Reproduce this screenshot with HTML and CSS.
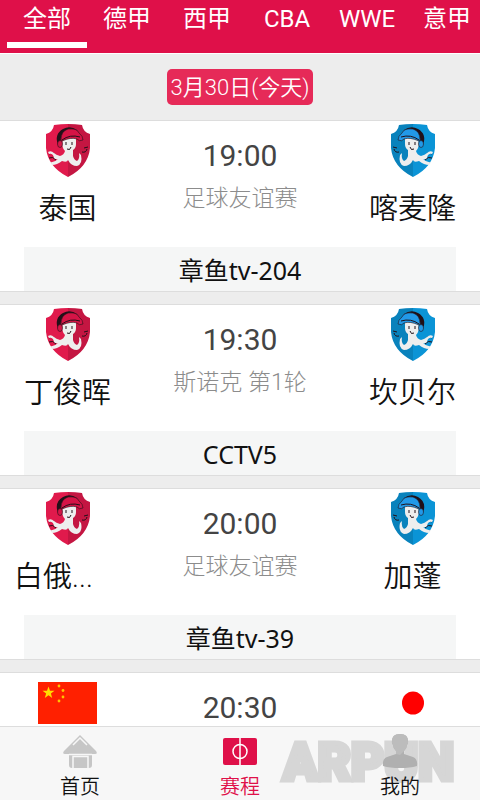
FILE: index.html
```
<!DOCTYPE html>
<html lang="zh-CN">

<head>
  <meta charset="UTF-8">
  <meta name="viewport" content="width=device-width, initial-scale=1.0">
  <title>赛程</title>
  <link rel="stylesheet" href="styles.css">
</head>

<body>
  <!-- shapes shared by the match cards -->
  <svg class="defs" aria-hidden="true">
    <symbol id="shield" viewBox="0 0 44 53">
      <path fill="currentColor" d="M8 1Q22-1 36 1Q37 8 44 10V24Q42 43 22 53Q2 43 0 24V10Q7 8 8 1Z" />
      <path class="shade" d="M22 0Q29 0 36 1Q37 8 44 10V24Q42 43 22 53Z" />
      <path class="curl" d="M3 30q4-3 6 1M3 34q4-2 7 2M36 28q4 1 5-3M38 24l4-1" />
      <path class="squid" d="M17 14L16 21Q17 25 19 27Q18 31 14 32Q10 31 8 29Q5 26 2 28L3 30Q7 29 8 34Q10 36 12 35Q8 39 4 38L6 41Q11 41 16 37Q21 39 22 36Q25 42 31 42Q37 40 35 31L33 29Q34 35 31 37Q28 36 27 32L27 26Q30 24 30 20V14Z" />
      <path class="ink" d="M12 21Q8 10 17 5Q24 1 31 6L32 8Q23 4 17 9Q14 12 15 21Z" />
      <path class="cap" d="M15 16Q15 7 22 5Q31 4 33 9Q37 12 37 16Q33 18 31 15Q25 13 16 17Z" />
      <path class="brim" d="M16 16Q24 10 34 13" />
      <ellipse class="cap" cx="14" cy="20" rx="2.500" ry="3.500" />
      <path class="eyes" d="M20 18v3M26 18v3M21 25q3 2 4-2" />
    </symbol>
  </svg>

  <nav class="tabs" aria-label="联赛">
    <a class="tab active" href="#all" aria-current="true">全部</a>
    <a class="tab" href="#de">德甲</a>
    <a class="tab" href="#xi">西甲</a>
    <a class="tab" href="#cba">CBA</a>
    <a class="tab" href="#wwe">WWE</a>
    <a class="tab" href="#yi">意甲</a>
  </nav>

  <main class="schedule">
    <h1 class="day"><span class="date">3月30日(今天)</span></h1>

    <article class="match">
      <div class="sides">
        <div class="team"><svg class="badge red" aria-hidden="true"><use href="#shield" /></svg><span class="name">泰国</span></div>
        <div class="info"><time class="time">19:00</time><span class="league">足球友谊赛</span></div>
        <div class="team"><svg class="badge blue" aria-hidden="true"><use href="#shield" /></svg><span class="name">喀麦隆</span></div>
      </div>
      <p class="channel">章鱼tv-204</p>
    </article>

    <article class="match">
      <div class="sides">
        <div class="team"><svg class="badge red" aria-hidden="true"><use href="#shield" /></svg><span class="name">丁俊晖</span></div>
        <div class="info"><time class="time">19:30</time><span class="league">斯诺克 第1轮</span></div>
        <div class="team"><svg class="badge blue" aria-hidden="true"><use href="#shield" /></svg><span class="name">坎贝尔</span></div>
      </div>
      <p class="channel">CCTV5</p>
    </article>

    <article class="match">
      <div class="sides">
        <div class="team"><svg class="badge red" aria-hidden="true"><use href="#shield" /></svg><span class="name cut">白俄...</span></div>
        <div class="info"><time class="time">20:00</time><span class="league">足球友谊赛</span></div>
        <div class="team"><svg class="badge blue" aria-hidden="true"><use href="#shield" /></svg><span class="name">加蓬</span></div>
      </div>
      <p class="channel">章鱼tv-39</p>
    </article>

    <article class="match">
      <div class="sides">
        <div class="team">
          <svg class="flag" viewBox="0 0 59 42" aria-hidden="true">
            <path fill="#ff2000" d="M0 0h59v42H0z" />
            <path fill="#ffde00" d="M10.500 4.500l1.500 4.300h4.500l-3.600 2.700 1.300 4.400-3.700-2.600-3.700 2.600 1.300-4.400-3.600-2.700h4.500z" />
            <g fill="#ffc400"><circle cx="21" cy="4" r="1.400" /><circle cx="25" cy="8.500" r="1.400" /><circle cx="25" cy="15" r="1.400" /><circle cx="21" cy="19" r="1.400" /></g>
          </svg>
        </div>
        <div class="info"><time class="time">20:30</time></div>
        <div class="team">
          <svg class="flag" viewBox="0 0 59 42" aria-hidden="true">
            <path fill="#fff" d="M0 0h59v42H0z" />
            <ellipse cx="30" cy="21" rx="11" ry="11.500" fill="#f00" />
          </svg>
        </div>
      </div>
    </article>
  </main>

  <nav class="bottom" aria-label="主导航">
    <a class="item" href="#home">
      <svg class="icon" viewBox="0 0 36 36" aria-hidden="true">
        <path fill="#c6c6c6" d="M18 1L34 17Q36 20 33 20H30V31Q30 34 27 34H10Q7 34 7 31V20H3Q0 20 2 17Z" />
        <path fill="none" stroke="#f7f7f7" stroke-width="1.500" d="M11 11L18 4L25 11M7 20.500H30M11 34V22.500H26V34" />
      </svg>
      首页
    </a>
    <a class="item current" href="#schedule" aria-current="page">
      <svg class="icon" viewBox="0 0 36 36" aria-hidden="true">
        <rect x="1" y="4" width="34" height="27" rx="2" fill="#df1049" />
        <g fill="none" stroke="#fff" stroke-width="1.500"><path d="M18 4v27" /><circle cx="18" cy="17.500" r="7" /></g>
      </svg>
      赛程
    </a>
    <a class="item" href="#me">
      <svg class="icon" viewBox="0 0 36 36" aria-hidden="true">
        <path fill="#b0b0b0" d="M1 32Q0 25 5 23L14 20V17Q11 14 11 11L10 9Q9 0 18 0Q27 0 26 9L25 11Q25 14 22 17V20L31 23Q36 25 35 32Q28 34 18 34Q8 34 1 32Z" />
        <path fill="#bcbcbc" d="M14 20V17Q11 14 11 11L10 9Q9 0 18 0Q27 0 26 9L25 11Q25 14 22 17L18 21Z" />
      </svg>
      我的
    </a>
    <span class="mark">ARPUN</span>
  </nav>
</body>

</html>
```
FILE: styles.css
```
* {
  box-sizing: border-box;
}

body {
  display: flex;
  flex-direction: column;
  height: 100vh;
  margin: 0;
  overflow: hidden;
  background: #ededed;
  color: #111;
  font-family: Roboto, "Noto Sans CJK SC", sans-serif;
}

a {
  color: inherit;
  text-decoration: none;
}

.defs {
  position: absolute;
  width: 0;
  height: 0;
}

.tabs {
  display: flex;
  flex: none;
  height: 54px;
  padding-left: 7px;
  overflow: hidden;
  background: #df1049;
  border-bottom: 1px solid #fff;
  color: #fff;
  font-size: 24px;
  line-height: 38px;
}

.tab {
  flex: 0 0 80px;
  height: 48px;
  text-align: center;
}

.active {
  border-bottom: 6px solid #fff;
}

.schedule {
  flex: 1;
  min-height: 0;
  overflow: hidden;
}

.day {
  display: flex;
  justify-content: center;
  margin: 0;
  padding: 15px 0;
  font-size: 22px;
  font-weight: 350;
}

.date {
  padding: 2px 4px 0;
  border-radius: 5px;
  background: #e62a58;
  color: #fff;
  line-height: 34px;
}

.match {
  margin-bottom: 12px;
  background: #fff;
  border: solid #ddd;
  border-width: 1px 0;
}

.sides {
  display: flex;
  justify-content: space-between;
  height: 126px;
  padding-top: 3px;
}

.team {
  display: flex;
  flex-direction: column;
  align-items: center;
  width: 135px;
}

.badge {
  width: 44px;
  height: 53px;
}

.red {
  --cap: #d51446;
  color: #e01a4c;
}

.blue {
  --cap: #2299e8;
  color: #0b94d6;
}

.blue use {
  transform: scaleX(-1);
  transform-origin: center;
}

.shade {
  fill: #000;
  opacity: .12;
}

.squid {
  fill: #eee;
}

.ink {
  fill: #211018;
}

.cap {
  fill: var(--cap);
  stroke: #211018;
  stroke-width: .6;
}

.eyes,
.curl,
.brim {
  fill: none;
  stroke: #211018;
}

.flag {
  width: 59px;
  height: 42px;
  margin-top: 6px;
}

.name {
  font-size: 29px;
  font-weight: 350;
  line-height: 64px;
}

/* shortened names sit to the left of the badge */
.cut {
  padding-right: 28px;
}

.info {
  display: flex;
  flex-direction: column;
  align-items: center;
  padding-top: 10px;
}

.time {
  color: #444;
  font-size: 30px;
  line-height: 44px;
}

.league {
  color: #8c8c8c;
  font-size: 23px;
  font-weight: 300;
  line-height: 42px;
}

.channel {
  margin: 0 24px;
  padding-top: 2px;
  background: #f5f6f6;
  font-family: "Noto Sans", "Noto Sans CJK SC", sans-serif;
  font-size: 25px;
  line-height: 42px;
  text-align: center;
}

.bottom {
  position: relative;
  display: flex;
  flex: none;
  height: 74px;
  background: #f7f7f7;
  border-top: 1px solid #ddd;
  font-size: 20px;
  font-weight: 350;
  line-height: 34px;
}

.item {
  display: flex;
  flex: 1;
  flex-direction: column;
  align-items: center;
  padding-top: 7px;
  z-index: 1;
}

.icon {
  flex: none;
  width: 36px;
  height: 36px;
}

.current {
  color: #df1049;
}

/* translucent mark over the corner of the bar */
.mark {
  position: absolute;
  right: 26px;
  bottom: 0;
  color: #d6d6d6;
  font-size: 51px;
  font-weight: 900;
  line-height: 74px;
  -webkit-text-stroke: 5px #d6d6d6;
}
```
